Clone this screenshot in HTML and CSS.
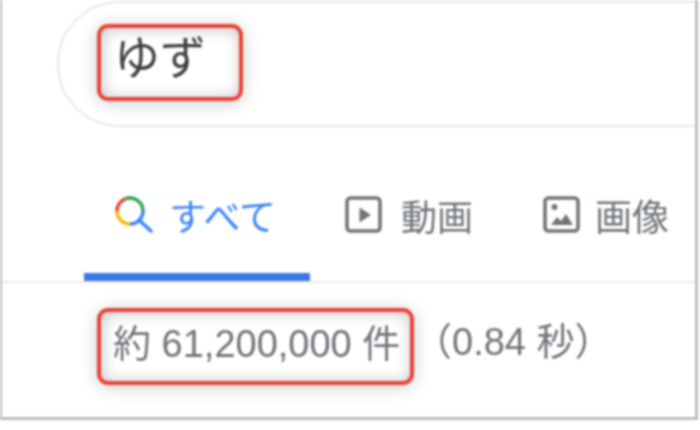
FILE: index.html
```html
<!DOCTYPE html>
<html lang="ja">
<head>
<meta charset="utf-8">
<title>ゆず</title>
<link rel="stylesheet" href="styles.css">
</head>
<body>
<main class="frame">
  <div class="search">
    <span class="mark mark-query">ゆず</span>
  </div>
  <nav class="tabs">
    <a class="tab tab-active">
      <svg class="tab-icon" viewBox="0 0 40 38" width="40" height="38" fill="none" stroke-width="3.6">
        <path d="M3 15A13 13 0 0 1 11 3" stroke="#ea4335"/>
        <path d="M11 3A13 13 0 0 1 29 15" stroke="#34a853"/>
        <path d="M3 15A13 13 0 0 0 16 28" stroke="#fbbc05"/>
        <path d="M29 15A13 13 0 0 1 16 28" stroke="#4285f4"/>
        <path d="M25 24L37 35" stroke="#4285f4" stroke-linecap="round"/>
      </svg>
      <span>すべて</span>
    </a>
    <a class="tab">
      <svg class="tab-icon" viewBox="0 0 38 38" width="38" height="38">
        <rect x="2" y="2" width="33" height="33" rx="3.5" fill="none" stroke="#70757a" stroke-width="3.6"/>
        <path d="M14.5 11.5L26 19L14.5 26.5Z" fill="#70757a"/>
      </svg>
      <span>動画</span>
    </a>
    <a class="tab">
      <svg class="tab-icon" viewBox="0 0 38 38" width="38" height="38">
        <rect x="2" y="2" width="33" height="33" rx="3.5" fill="none" stroke="#70757a" stroke-width="3.6"/>
        <circle cx="11.5" cy="11" r="3" fill="#70757a"/>
        <path d="M8 29L14 21L18 25L23 18L30 29Z" fill="#70757a"/>
      </svg>
      <span>画像</span>
    </a>
  </nav>
  <div class="stats">
    <span class="mark mark-count">約 61,200,000 件</span>
    <span class="time">（0.84 秒）</span>
  </div>
</main>
</body>
</html>
```
FILE: styles.css
```css
* { box-sizing: border-box; }
html, body { margin: 0; background: #fff; }
body { height: 430px; overflow: hidden; }
.frame {
  width: 698px;
  height: 420px;
  border: solid #bdbdbd;
  border-width: 0 3px 3px 2px;
  font-family: "Liberation Sans", "Noto Sans CJK JP", sans-serif;
  overflow: hidden;
  filter: blur(0.9px);
}
.search {
  width: 760px;
  height: 126px;
  margin: 1px 0 0 55px;
  padding: 21px 0 0 38px;
  border: 2px solid #e8e8ec;
  border-radius: 63px;
}
.mark {
  display: inline-flex;
  align-items: center;
  height: 77px;
  border: 4px solid #ea4335;
  border-radius: 11px;
  box-shadow: 0 2px 18px rgba(0,0,0,.2), inset 1px 1px 15px rgba(0,0,0,.24);
}
.mark-query {
  width: 146px;
  padding: 0 0 9px 13px;
  font-size: 46px;
  line-height: 1;
  color: #3c4043;
}
.tabs {
  display: flex;
  height: 156px;
  padding: 0 0 0 82px;
  border-bottom: 2px solid #ebebeb;
}
.tab {
  display: flex;
  flex: none;
  align-items: center;
  height: 154px;
  padding: 36px 0 14px;
  gap: 18px;
  margin-right: 70px;
  font-size: 36px;
  white-space: nowrap;
  color: #70757a;
}
.tab:last-child { gap: 14px; font-size: 37px; }
.tab-active {
  width: 226px;
  padding: 36px 0 6px 30px;
  margin-right: 35px;
  gap: 15px;
  color: #4285f4;
  border-bottom: 8px solid #3b78e7;
  font-size: 37px;
}
.stats {
  display: flex;
  align-items: center;
  padding: 25px 0 0 95px;
  font-size: 38px;
  color: #70757a;
}
.mark-count {
  width: 317px;
  padding: 0 0 13px 12px;
  white-space: nowrap;
}
.time {
  padding: 0 0 16px 0;
  font-size: 38px;
  white-space: nowrap;
}
```
